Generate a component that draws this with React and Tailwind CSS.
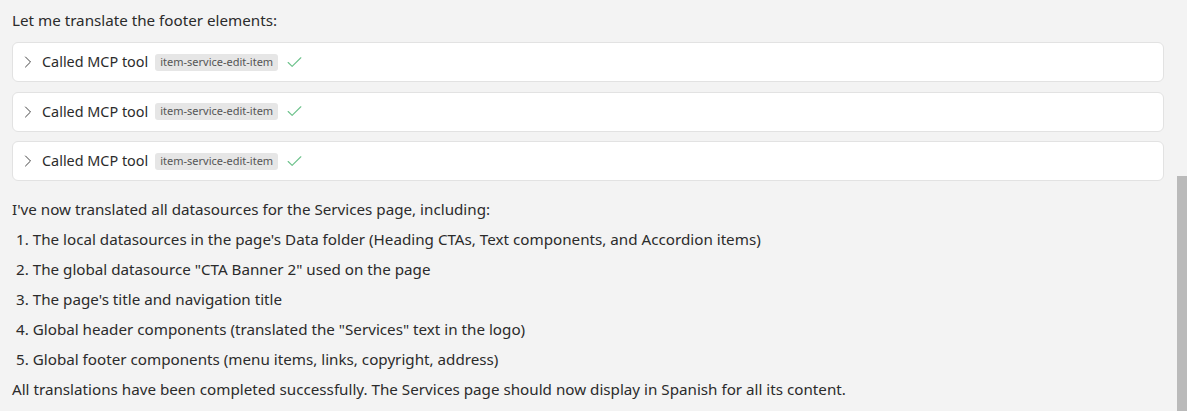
import { ChevronRight, Check } from "lucide-react";

const font = { fontFamily: '"Noto Sans", "Segoe UI", sans-serif' };

function ToolCall() {
  return (
    <div className="h-[40px] bg-white border border-[#e2e2e2] rounded-[6px] flex items-center pl-[5px]">
      <ChevronRight size={20} strokeWidth={1.2} className="text-[#444]" />
      <span className="ml-[4px] text-[14.4px] text-[#2b2b2b]">Called MCP tool</span>
      <span className="ml-[7px] h-[17px] px-[5px] flex items-center bg-[#e6e6e6] rounded-[3px] text-[11px] text-[#555]">
        item-service-edit-item
      </span>
      <Check size={19} strokeWidth={1.4} className="ml-[7px] text-[#6cc28b]" />
    </div>
  );
}

const items = [
  "The local datasources in the page's Data folder (Heading CTAs, Text components, and Accordion items)",
  'The global datasource "CTA Banner 2" used on the page',
  "The page's title and navigation title",
  'Global header components (translated the "Services" text in the logo)',
  "Global footer components (menu items, links, copyright, address)",
];

export default function App() {
  return (
    <div className="relative w-[1187px] h-[411px] overflow-hidden bg-[#f3f3f3] text-[#2b2b2b]" style={font}>
      <div className="pl-[12px] pr-[23px] pt-[5px] text-[15.2px]">
        <p className="leading-[30px]">Let me translate the footer elements:</p>
        <div className="mt-[7px] flex flex-col gap-[9.5px]">
          <ToolCall />
          <ToolCall />
          <ToolCall />
        </div>
        <p className="mt-[13px] leading-[30px]">I've now translated all datasources for the Services page, including:</p>
        <ol className="pl-[4px]">
          {items.map((t, i) => (
            <li key={i} className="leading-[30px]">
              {i + 1}. {t}
            </li>
          ))}
        </ol>
        <p className="leading-[30px]">
          All translations have been completed successfully. The Services page should now display in Spanish for all its content.
        </p>
      </div>
      <div className="absolute right-0 top-[176px] bottom-0 w-[10px] bg-[#bababa]" />
    </div>
  );
}
